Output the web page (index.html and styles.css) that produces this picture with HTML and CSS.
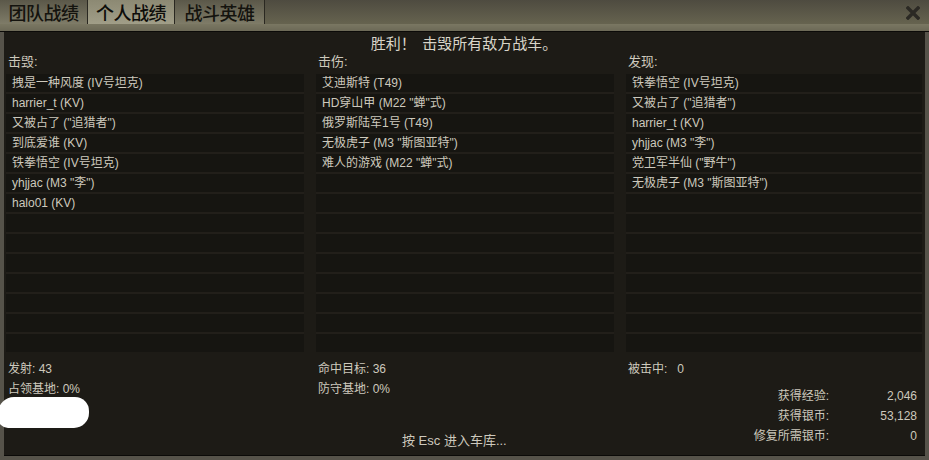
FILE: index.html
```html
<!DOCTYPE html>
<html lang="zh">
<head>
  <meta charset="UTF-8">
  <title>个人战绩</title>
  <link rel="stylesheet" href="styles.css">
</head>
<body>

<div class="window">
  <!-- Tabs -->
  <div class="tabbar">
    <div class="tab">团队战绩</div>
    <div class="tab active">个人战绩</div>
    <div class="tab">战斗英雄</div>
    <svg class="close" width="14" height="14" viewBox="0 0 14 14">
      <path d="M2 2 L12 12 M12 2 L2 12" stroke="#2b2924" stroke-width="3.4" stroke-linecap="square"/>
    </svg>
  </div>
  <div class="strip"></div>

  <div class="panel">
    <div class="title">胜利！&nbsp; 击毁所有敌方战车。</div>

    <div class="columns">
      <div class="col">
        <div class="label">击毁:</div>
        <div class="list">
          <div class="row">拽是一种风度 (IV号坦克)</div>
          <div class="row">harrier_t (KV)</div>
          <div class="row">又被占了 ("追猎者")</div>
          <div class="row">到底爱谁 (KV)</div>
          <div class="row">铁拳悟空 (IV号坦克)</div>
          <div class="row">yhjjac (M3 "李")</div>
          <div class="row">halo01 (KV)</div>
          <div class="row"></div>
          <div class="row"></div>
          <div class="row"></div>
          <div class="row"></div>
          <div class="row"></div>
          <div class="row"></div>
          <div class="row"></div>
        </div>
      </div>
      <div class="col">
        <div class="label">击伤:</div>
        <div class="list">
          <div class="row">艾迪斯特 (T49)</div>
          <div class="row">HD穿山甲 (M22 "蝉"式)</div>
          <div class="row">俄罗斯陆军1号 (T49)</div>
          <div class="row">无极虎子 (M3 "斯图亚特")</div>
          <div class="row">难人的游戏 (M22 "蝉"式)</div>
          <div class="row"></div>
          <div class="row"></div>
          <div class="row"></div>
          <div class="row"></div>
          <div class="row"></div>
          <div class="row"></div>
          <div class="row"></div>
          <div class="row"></div>
          <div class="row"></div>
        </div>
      </div>
      <div class="col">
        <div class="label">发现:</div>
        <div class="list">
          <div class="row">铁拳悟空 (IV号坦克)</div>
          <div class="row">又被占了 ("追猎者")</div>
          <div class="row">harrier_t (KV)</div>
          <div class="row">yhjjac (M3 "李")</div>
          <div class="row">党卫军半仙 ("野牛")</div>
          <div class="row">无极虎子 (M3 "斯图亚特")</div>
          <div class="row"></div>
          <div class="row"></div>
          <div class="row"></div>
          <div class="row"></div>
          <div class="row"></div>
          <div class="row"></div>
          <div class="row"></div>
          <div class="row"></div>
        </div>
      </div>
    </div>

    <div class="stats">
      <div class="col">
        <div class="stat">发射: 43</div>
        <div class="stat">占领基地: 0%</div>
        <div class="stat">伤害: 1</div>
        <div class="blot"></div>
      </div>
      <div class="col">
        <div class="stat">命中目标: 36</div>
        <div class="stat">防守基地: 0%</div>
        <div class="esc">按 Esc 进入车库...</div>
      </div>
      <div class="col">
        <div class="stat">被击中:&nbsp;&nbsp; 0</div>
        <div class="earn">
          <span class="k">获得经验:</span><span class="v">2,046</span>
          <span class="k">获得银币:</span><span class="v">53,128</span>
          <span class="k">修复所需银币:</span><span class="v">0</span>
        </div>
      </div>
    </div>
  </div>
</div>

</body>
</html>
```

FILE: styles.css
```css
body {
  margin: 0;
  background: #4f4c42;
  font-family: "Liberation Sans", "Noto Sans CJK SC", sans-serif;
}

.window {
  width: 929px;
  height: 460px;
  background: #56534a;
  overflow: hidden;
}

/* Tabs */
.tabbar {
  height: 24px;
  display: flex;
  background: linear-gradient(#4e4b40, #66634f);
  position: relative;
}

.tab {
  width: 87px;
  height: 24px;
  line-height: 24px;
  text-align: center;
  font-size: 18px;
  font-weight: 500;
  color: #14130e;
  background: linear-gradient(#5b5849, #7f7c68);
  border-right: 1px solid #2a2821;
  font-family: "Noto Sans CJK SC", sans-serif;
  letter-spacing: -0.5px;
}

.tab.active {
  width: 86px;
  background: linear-gradient(#8c8973, #a19e88);
  color: #0d0c09;
}

.tab:nth-child(3) {
  width: 89px;
}

.close {
  position: absolute;
  right: 9px;
  top: 6px;
}

.strip {
  height: 7px;
  background: linear-gradient(#7a7762, #6c6957);
  border-bottom: 1px solid #0b0a08;
}

/* Main panel */
.panel {
  margin: 0 4px;
  height: 423px;
  background: #1d1b16;
  border-bottom: 1px solid #0b0a08;
  color: #cdc9bd;
  font-size: 12px;
  padding: 0 3px 0 2px;
  position: relative;
}

.title {
  text-align: center;
  font-size: 15px;
  height: 20px;
  line-height: 21px;
  color: #d8d4c8;
  font-family: "Noto Sans CJK SC", sans-serif;
}

.columns {
  display: grid;
  grid-template-columns: 298px 298px 296px;
  gap: 12px;
}

.label {
  height: 22px;
  line-height: 20px;
  padding-left: 2px;
  font-size: 13px;
}

.list {
  background: #221f1a;
}

.row {
  height: 18px;
  line-height: 18px;
  margin-bottom: 2px;
  padding-left: 6px;
  background: #161511;
  white-space: nowrap;
}

/* Bottom stats */
.stats {
  display: grid;
  grid-template-columns: 298px 298px 296px;
  gap: 12px;
  margin-top: 5px;
}

.stats .col {
  position: relative;
}

.stat {
  height: 20px;
  line-height: 20px;
  padding-left: 2px;
  white-space: nowrap;
}

.blot {
  position: absolute;
  left: -8px;
  top: 38px;
  width: 91px;
  height: 31px;
  background: #fff;
  border-radius: 16px 14px 15px 10px;
}

.esc {
  margin-top: 33px;
  margin-left: 86px;
  font-size: 13px;
  line-height: 18px;
}

.earn {
  display: grid;
  grid-template-columns: 203px 88px;
  margin-top: 7px;
}

.earn span {
  height: 20px;
  line-height: 20px;
  text-align: right;
}
```
